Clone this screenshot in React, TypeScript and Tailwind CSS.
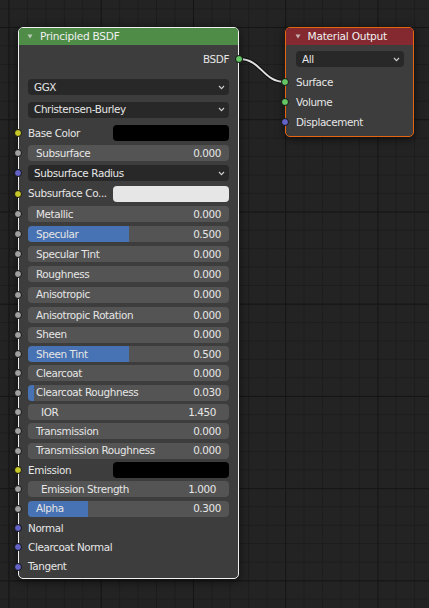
import React from "react";

type Kind = "color" | "slider" | "num" | "menu" | "label";
type Row = { kind: Kind; label: string; sock: string; value?: string; frac?: number; swatch?: string };

const Y = "bg-[#c7c729]";
const G = "bg-[#a1a1a1]";
const P = "bg-[#6363c7]";
const S = "bg-[#63c763]";

const rows: Row[] = [
  { kind: "color", label: "Base Color", sock: Y, swatch: "bg-[#000000]" },
  { kind: "slider", label: "Subsurface", sock: G, value: "0.000", frac: 0 },
  { kind: "menu", label: "Subsurface Radius", sock: P },
  { kind: "color", label: "Subsurface Co...", sock: Y, swatch: "bg-[#e6e6e6]" },
  { kind: "slider", label: "Metallic", sock: G, value: "0.000", frac: 0 },
  { kind: "slider", label: "Specular", sock: G, value: "0.500", frac: 0.5 },
  { kind: "slider", label: "Specular Tint", sock: G, value: "0.000", frac: 0 },
  { kind: "slider", label: "Roughness", sock: G, value: "0.000", frac: 0 },
  { kind: "slider", label: "Anisotropic", sock: G, value: "0.000", frac: 0 },
  { kind: "slider", label: "Anisotropic Rotation", sock: G, value: "0.000", frac: 0 },
  { kind: "slider", label: "Sheen", sock: G, value: "0.000", frac: 0 },
  { kind: "slider", label: "Sheen Tint", sock: G, value: "0.500", frac: 0.5 },
  { kind: "slider", label: "Clearcoat", sock: G, value: "0.000", frac: 0 },
  { kind: "slider", label: "Clearcoat Roughness", sock: G, value: "0.030", frac: 0.03 },
  { kind: "num", label: "IOR", sock: G, value: "1.450" },
  { kind: "slider", label: "Transmission", sock: G, value: "0.000", frac: 0 },
  { kind: "slider", label: "Transmission Roughness", sock: G, value: "0.000", frac: 0 },
  { kind: "color", label: "Emission", sock: Y, swatch: "bg-[#000000]" },
  { kind: "num", label: "Emission Strength", sock: G, value: "1.000" },
  { kind: "slider", label: "Alpha", sock: G, value: "0.300", frac: 0.3 },
  { kind: "label", label: "Normal", sock: P },
  { kind: "label", label: "Clearcoat Normal", sock: P },
  { kind: "label", label: "Tangent", sock: P },
];

function Socket({ color, right }: { color: string; right?: boolean }) {
  return (
    <span
      className={`absolute top-1/2 -translate-y-1/2 w-[8px] h-[8px] rounded-full border border-[#141414] ${color} ${
        right ? "right-[-5px]" : "left-[-5px]"
      }`}
    />
  );
}

function Chevron() {
  return (
    <svg width="7" height="5" viewBox="0 0 7 5" className="shrink-0">
      <polyline points="1,1 3.5,3.6 6,1" fill="none" stroke="#d0d0d0" strokeWidth="1.1" />
    </svg>
  );
}

function Triangle() {
  return (
    <svg width="6" height="5" viewBox="0 0 6 5" className="shrink-0">
      <polygon points="0.5,0.5 5.5,0.5 3,4.5" fill="#d8d8d8" fillOpacity="0.8" />
    </svg>
  );
}

function Dropdown({ text, w }: { text: string; w: string }) {
  return (
    <div className={`h-[16px] ${w} rounded-[4px] bg-[#282828] flex items-center pl-[6px] pr-[4px]`}>
      <span className="flex-1 text-[#e6e6e6]">{text}</span>
      <Chevron />
    </div>
  );
}

function RowView({ r, h }: { r: Row; h: string }) {
  let body: React.ReactNode;
  if (r.kind === "color") {
    body = (
      <div className="flex items-center w-full">
        <span className="flex-1 whitespace-nowrap text-[#e6e6e6]">{r.label}</span>
        <div className={`w-[116px] h-[16px] rounded-[4px] ${r.swatch}`} />
      </div>
    );
  } else if (r.kind === "slider") {
    body = (
      <div className="relative w-full h-[16px] rounded-[4px] bg-[#545454] overflow-hidden">
        {r.frac ? (
          <div className="absolute left-0 top-0 bottom-0 bg-[#4772b3]" style={{ width: `${r.frac * 100}%` }} />
        ) : null}
        <div className="relative flex items-center h-full pl-[8px] pr-[8px] text-[#e6e6e6]">
          <span className="flex-1 whitespace-nowrap">{r.label}</span>
          <span>{r.value}</span>
        </div>
      </div>
    );
  } else if (r.kind === "num") {
    body = (
      <div className="flex items-center w-full h-[16px] rounded-[4px] bg-[#545454] pl-[13px] pr-[13px] text-[#e6e6e6]">
        <span className="flex-1 whitespace-nowrap">{r.label}</span>
        <span>{r.value}</span>
      </div>
    );
  } else if (r.kind === "menu") {
    body = <Dropdown text={r.label} w="w-full" />;
  } else {
    body = <span className="whitespace-nowrap text-[#e6e6e6]">{r.label}</span>;
  }
  return (
    <div className={`relative flex items-center ${h} pl-[9px] pr-[9px]`}>
      <Socket color={r.sock} />
      {body}
    </div>
  );
}

export default function App() {
  return (
    <div
      className="relative w-full h-[608px] overflow-hidden bg-[#232323] [background-image:linear-gradient(to_right,#151515_1px,transparent_1px),linear-gradient(to_bottom,#151515_1px,transparent_1px),linear-gradient(to_right,#1c1c1c_1px,transparent_1px),linear-gradient(to_bottom,#1c1c1c_1px,transparent_1px)] [background-size:92.25px_92.25px,92.25px_92.25px,18.45px_18.45px,18.45px_18.45px] [background-position:8.5px_27px,8.5px_27px,8.5px_8.5px,8.5px_8.5px] text-[10.4px] leading-none tracking-[-0.38px] [font-family:'DejaVu_Sans',sans-serif]"
    >
      <svg className="absolute left-0 top-0 pointer-events-none" width="429" height="608">
        <path d="M239 59 C 262 59, 262 82, 285.7 82" fill="none" stroke="#000" strokeOpacity="0.6" strokeWidth="4" />
        <path d="M239 59 C 262 59, 262 82, 285.7 82" fill="none" stroke="#e0e0e0" strokeWidth="2" />
      </svg>

      <div className="relative flex items-start pt-[27px] pl-[18px] gap-[46px]">
        {/* Principled BSDF */}
        <div className="w-[221px] rounded-[5px] border border-[#f0f0f0] bg-[#3d3d3d] shadow-[0_2px_10px_rgba(0,0,0,0.6)]">
          <div className="h-[17px] rounded-t-[4px] bg-[#4e8c47] flex items-center pl-[8px] gap-[7px] text-[#f0f0f0] text-[10.6px] tracking-[-0.25px]">
            <Triangle />
            <span>Principled BSDF</span>
          </div>
          <div className="pt-[4px] pb-[2px]">
            <div className="relative flex items-center justify-end h-[20px] pr-[9px] text-[#e6e6e6]">
              <span>BSDF</span>
              <Socket color={S} right />
            </div>
            <div className="mt-[10px] pl-[9px] pr-[9px]">
              <Dropdown text="GGX" w="w-full" />
            </div>
            <div className="mt-[6.5px] pl-[9px] pr-[9px]">
              <Dropdown text="Christensen-Burley" w="w-full" />
            </div>
            <div className="mt-[5.5px]">
              {rows.map((r, i) => (
                <RowView key={r.label} r={r} h={i < 10 ? "h-[20.2px]" : "h-[19.35px]"} />
              ))}
            </div>
          </div>
        </div>

        {/* Material Output */}
        <div className="w-[129px] rounded-[5px] border border-[#e8650f] bg-[#3d3d3d] shadow-[0_2px_10px_rgba(0,0,0,0.6)]">
          <div className="h-[17px] rounded-t-[4px] bg-[#83292f] flex items-center pl-[8.5px] gap-[7px] text-[#f0f0f0] text-[10.6px] tracking-[-0.25px]">
            <Triangle />
            <span>Material Output</span>
          </div>
          <div className="pt-[6px] pb-[4px]">
            <div className="pl-[10px] pr-[9px]">
              <Dropdown text="All" w="w-full" />
            </div>
            <div className="mt-[5px]">
              {[
                { l: "Surface", c: S },
                { l: "Volume", c: S },
                { l: "Displacement", c: P },
              ].map((s) => (
                <div key={s.l} className="relative flex items-center h-[20px] pl-[10px] text-[#e6e6e6]">
                  <Socket color={s.c} />
                  <span>{s.l}</span>
                </div>
              ))}
            </div>
          </div>
        </div>
      </div>
    </div>
  );
}
